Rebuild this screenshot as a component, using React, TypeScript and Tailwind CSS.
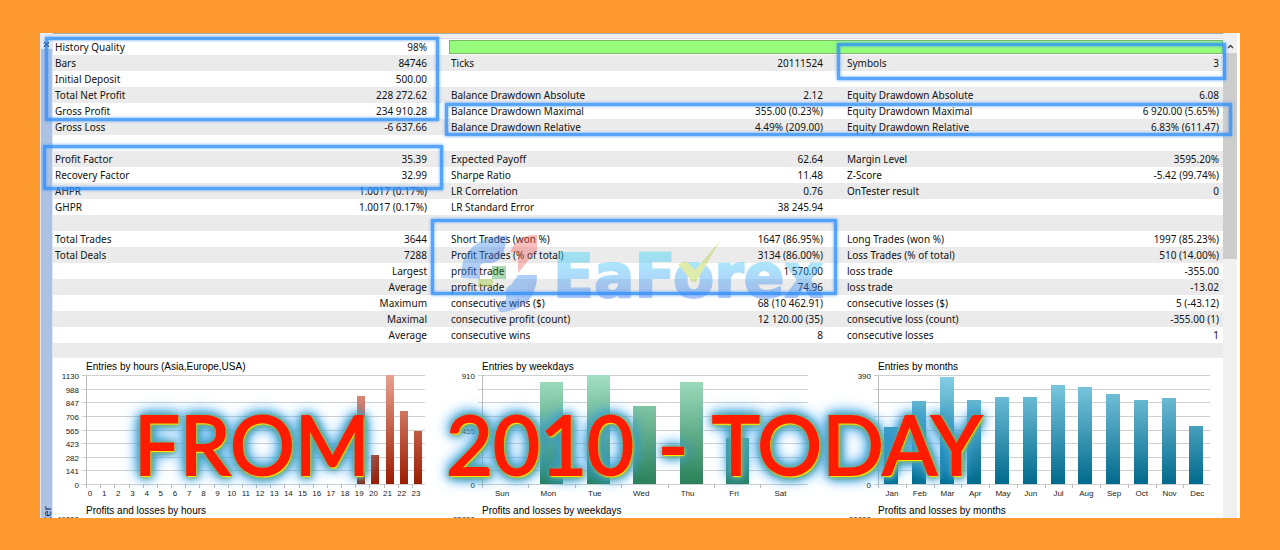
import { ReactNode } from 'react';

type Cell = [label: string, value: string];

const rows: (Cell | null)[][] = [
  [['Bars', '84746'], ['Ticks', '20111524'], ['Symbols', '3']],
  [['Initial Deposit', '500.00'], null, null],
  [['Total Net Profit', '228 272.62'], ['Balance Drawdown Absolute', '2.12'], ['Equity Drawdown Absolute', '6.08']],
  [['Gross Profit', '234 910.28'], ['Balance Drawdown Maximal', '355.00 (0.23%)'], ['Equity Drawdown Maximal', '6 920.00 (5.65%)']],
  [['Gross Loss', '-6 637.66'], ['Balance Drawdown Relative', '4.49% (209.00)'], ['Equity Drawdown Relative', '6.83% (611.47)']],
  [null, null, null],
  [['Profit Factor', '35.39'], ['Expected Payoff', '62.64'], ['Margin Level', '3595.20%']],
  [['Recovery Factor', '32.99'], ['Sharpe Ratio', '11.48'], ['Z-Score', '-5.42 (99.74%)']],
  [['AHPR', '1.0017 (0.17%)'], ['LR Correlation', '0.76'], ['OnTester result', '0']],
  [['GHPR', '1.0017 (0.17%)'], ['LR Standard Error', '38 245.94'], null],
  [null, null, null],
  [['Total Trades', '3644'], ['Short Trades (won %)', '1647 (86.95%)'], ['Long Trades (won %)', '1997 (85.23%)']],
  [['Total Deals', '7288'], ['Profit Trades (% of total)', '3134 (86.00%)'], ['Loss Trades (% of total)', '510 (14.00%)']],
  [['', 'Largest'], ['profit trade', '1 570.00'], ['loss trade', '-355.00']],
  [['', 'Average'], ['profit trade', '74.96'], ['loss trade', '-13.02']],
  [['', 'Maximum'], ['consecutive wins ($)', '68 (10 462.91)'], ['consecutive losses ($)', '5 (-43.12)']],
  [['', 'Maximal'], ['consecutive profit (count)', '12 120.00 (35)'], ['consecutive loss (count)', '-355.00 (1)']],
  [['', 'Average'], ['consecutive wins', '8'], ['consecutive losses', '1']],
  [null, null, null],
];

type ChartData = {
  id: string;
  title: string;
  next: string;
  nextMax: string;
  colors: [string, string];
  yLabels: string[];
  labels: string[];
  // bar heights in px of the plot area
  bars: number[];
  barWidth: number;
  barStart: number;
  labelStart: number;
  step: number;
  end: number;
};

const charts: ChartData[] = [
  {
    id: 'hours',
    title: 'Entries by hours (Asia,Europe,USA)',
    next: 'Profits and losses by hours',
    nextMax: '49200',
    colors: ['#e9a08e', '#9c1c00'],
    yLabels: ['1130', '988', '847', '706', '565', '423', '282', '141', '0'],
    labels: Array.from({ length: 24 }, (_, i) => String(i)),
    bars: [...Array(19).fill(0), 88, 29, 109, 73, 53],
    barWidth: 8,
    barStart: 35,
    labelStart: 37,
    step: 14.17,
    end: 372,
  },
  {
    id: 'weekdays',
    title: 'Entries by weekdays',
    next: 'Profits and losses by weekdays',
    nextMax: '85800',
    colors: ['#a3dfc2', '#2a8159'],
    yLabels: ['910', '', '', '', '455', '', '', '', '0'],
    labels: ['Sun', 'Mon', 'Tue', 'Wed', 'Thu', 'Fri', 'Sat'],
    bars: [0, 102, 109, 78, 102, 46, 0],
    barWidth: 23,
    barStart: 45,
    labelStart: 53,
    step: 46.4,
    end: 359,
  },
  {
    id: 'months',
    title: 'Entries by months',
    next: 'Profits and losses by months',
    nextMax: '80800',
    colors: ['#86cfe6', '#006a8c'],
    yLabels: ['390', '', '', '', '', '', '', '', '0'],
    labels: ['Jan', 'Feb', 'Mar', 'Apr', 'May', 'Jun', 'Jul', 'Aug', 'Sep', 'Oct', 'Nov', 'Dec'],
    bars: [57, 83, 107, 84, 87, 87, 99, 97, 90, 84, 86, 58],
    barWidth: 14,
    barStart: 39,
    labelStart: 47,
    step: 27.75,
    end: 365,
  },
];

const TOP = 17;
const BOTTOM = 126;

function Chart({ data }: { data: ChartData }) {
  const gap = (BOTTOM - TOP) / 8;
  return (
    <svg width="396" height="160" className="font-['Liberation_Sans'] text-[8px]" fill="#222">
      <defs>
        <linearGradient id={data.id} gradientUnits="userSpaceOnUse" x1="0" y1={TOP} x2="0" y2={BOTTOM}>
          <stop offset="0" stopColor={data.colors[0]} />
          <stop offset="1" stopColor={data.colors[1]} />
        </linearGradient>
      </defs>
      <text x="33" y="12" fill="#000" className="text-[10px]">{data.title}</text>
      {data.yLabels.map((label, i) => {
        const y = Math.round(TOP + i * gap) + 0.5;
        return (
          <g key={i}>
            <path d={`M29 ${y}H${data.end}`} stroke="#cfcfcf" />
            {label && <text x="26" y={y + 3} textAnchor="end">{label}</text>}
          </g>
        );
      })}
      <path d={`M33.5 ${TOP}V${BOTTOM}`} stroke="#bbb" />
      {data.bars.map((h, i) => (
        <rect
          key={i}
          x={Math.round(data.barStart + i * data.step)}
          y={BOTTOM - h}
          width={data.barWidth}
          height={h}
          fill={`url(#${data.id})`}
        />
      ))}
      {data.labels.map((label, i) => (
        <g key={label}>
          <path d={`M${Math.round(33 + i * data.step) + 0.5} ${BOTTOM}v4`} stroke="#bbb" />
          <text x={data.labelStart + i * data.step} y="138" textAnchor="middle">{label}</text>
        </g>
      ))}
      <text x="33" y="156" fill="#000" className="text-[10px]">{data.next}</text>
      <text x="26" y="164" textAnchor="end">{data.nextMax}</text>
    </svg>
  );
}

function Highlight({ className }: { className: string }) {
  return (
    <div
      className={`absolute border-3 border-[#2e90fa]/80 shadow-[0_0_3px_#4a9bff,inset_0_0_3px_#4a9bff] ${className}`}
    />
  );
}

function Watermark() {
  return (
    <svg
      className="absolute left-[415px] top-[195px] opacity-40"
      width="380"
      height="90"
      viewBox="455 228 380 90"
    >
      <defs>
        <linearGradient id="wm" gradientUnits="userSpaceOnUse" x1="0" y1="254" x2="0" y2="298">
          <stop offset="0" stopColor="#2fd8fa" />
          <stop offset="1" stopColor="#3a70f0" />
        </linearGradient>
        <linearGradient id="wmBlue" x1="0" y1="0" x2="1" y2="1">
          <stop offset="0" stopColor="#3fa4f8" />
          <stop offset="1" stopColor="#2f62e6" />
        </linearGradient>
      </defs>
      <path d="M508 236C480 234 459 252 461 278L480 279V266Q481 263 485 263H491Q500 262 503 254Z" fill="url(#wmBlue)" />
      <path d="M510 252Q516 238 530 235H537V250L518 273V253Z" fill="#f25f5c" />
      <path d="M492 266H506V279H492Z" fill="#2f9e44" />
      <path d="M478 279H493V284L490 287H478Z" fill="#9cc92c" />
      <path d="M537 275C537 294 526 312 500 312L497 308L506 299V290Q507 286 511 285L518 275Z" fill="url(#wmBlue)" />
      <text
        x="553"
        y="297"
        fill="url(#wm)"
        stroke="url(#wm)"
        strokeWidth="2"
        strokeLinejoin="round"
        className="font-['DejaVu_Sans'] text-[60px] font-bold"
      >
        EaForex
      </text>
      <path d="M678 264L686 261L695 270L720 241L696 282H692Z" fill="#b4d032" />
    </svg>
  );
}

function BannerWord({ children }: { children: ReactNode }) {
  return (
    <span className="[-webkit-text-stroke:2px_#ff1c00] [text-shadow:1px_2px_0_#ffe400,1px_1px_3px_#b8d030,1px_1px_4px_#a0c040,1px_1px_6px_#7fb060,1px_1px_8px_#3f9cae,1px_1px_10px_#2f98c8,0_0_13px_#2a96e0,0_0_16px_#3aa0e8,0_0_18px_#4fb0f0]">
      {children}
    </span>
  );
}

export default function App() {
  return (
    <main className="min-h-screen bg-[#ff9a30] px-10 pt-[33px] pb-8">
      <div className="relative flex h-[485px] bg-white font-['Noto_Sans',sans-serif] text-[10px] text-[#111]">
        {/* Docked panel tab */}
        <aside className="flex w-[13px] flex-col justify-between overflow-hidden border-x border-[#dfe6f0] bg-[#adc2e2]">
          <button aria-label="Close" className="flex h-4 shrink-0 items-end justify-center bg-[#e8edf5] pb-[2px]">
            <svg width="5" height="5" stroke="#0c2040" strokeWidth="1.5">
              <path d="M0 0l5 5M5 0l-5 5" />
            </svg>
          </button>
          <span className="-mb-5 shrink-0 rotate-180 text-[11px] leading-3 text-[#10285a] [writing-mode:vertical-rl]">
            Tester
          </span>
        </aside>

        <div className="min-w-0 flex-1 overflow-hidden">
          <div className="h-[6px] border-y border-t-[#aaa] border-b-[#d8d8e0] bg-[#f0f0f0]" />
          <table className="w-[calc(100%+18px)] table-fixed border-collapse whitespace-nowrap">
            <tbody>
              <tr className="h-4">
                <td className="p-0 pl-[2px] leading-4">History Quality</td>
                <td className="p-0 pr-[22px] text-right leading-4">98%</td>
                <td colSpan={4} className="p-0 pr-[18px]">
                  <div className="h-[14px] border border-[#7cb868] bg-[#96fd7c]" />
                </td>
              </tr>
              {rows.map((cells, i) => (
                <tr key={i} className="h-4 last:h-[15px] odd:bg-white even:bg-[#ebebeb]">
                  {cells.flatMap((cell, j) => [
                    <td key={`${j}l`} className="p-0 pl-[2px] leading-4">{cell?.[0]}</td>,
                    <td key={`${j}v`} className="p-0 pr-[22px] text-right leading-4">{cell?.[1]}</td>,
                  ])}
                </tr>
              ))}
            </tbody>
          </table>
          <div className="grid w-[calc(100%+18px)] grid-cols-3 overflow-hidden">
            {charts.map((c) => (
              <Chart key={c.id} data={c} />
            ))}
          </div>
        </div>

        {/* Scrollbar */}
        <div className="mr-[3px] flex w-[14px] flex-col bg-[#f0f0f0] pt-[7px]">
          <button aria-label="Scroll up" className="flex h-[13px] items-center justify-center">
            <svg width="7" height="5" fill="none" stroke="#444" strokeWidth="1.5">
              <path d="M1 4l2.5-2.5L6 4" />
            </svg>
          </button>
          <div className="h-[206px] bg-[#cdcdcd]" />
        </div>

        <Watermark />

        <Highlight className="top-[4px] left-[5px] h-[84px] w-[394px]" />
        <Highlight className="top-[112px] left-[3px] h-[45px] w-[400px]" />
        <Highlight className="top-[10px] left-[797px] h-[37px] w-[389px]" />
        <Highlight className="top-[70px] left-[405px] h-[33px] w-[787px]" />
        <Highlight className="top-[186px] left-[391px] h-[76px] w-[406px]" />

        <h1 className="absolute top-[361px] left-[94px] flex gap-[76px] font-['Lato',sans-serif] text-[81px] leading-[100px] whitespace-nowrap text-[#ff1c00]">
          <BannerWord>FROM</BannerWord>
          <span className="flex gap-6">
            <BannerWord>2010</BannerWord>
            <BannerWord>-</BannerWord>
            <BannerWord>TODAY</BannerWord>
          </span>
        </h1>
      </div>
    </main>
  );
}
